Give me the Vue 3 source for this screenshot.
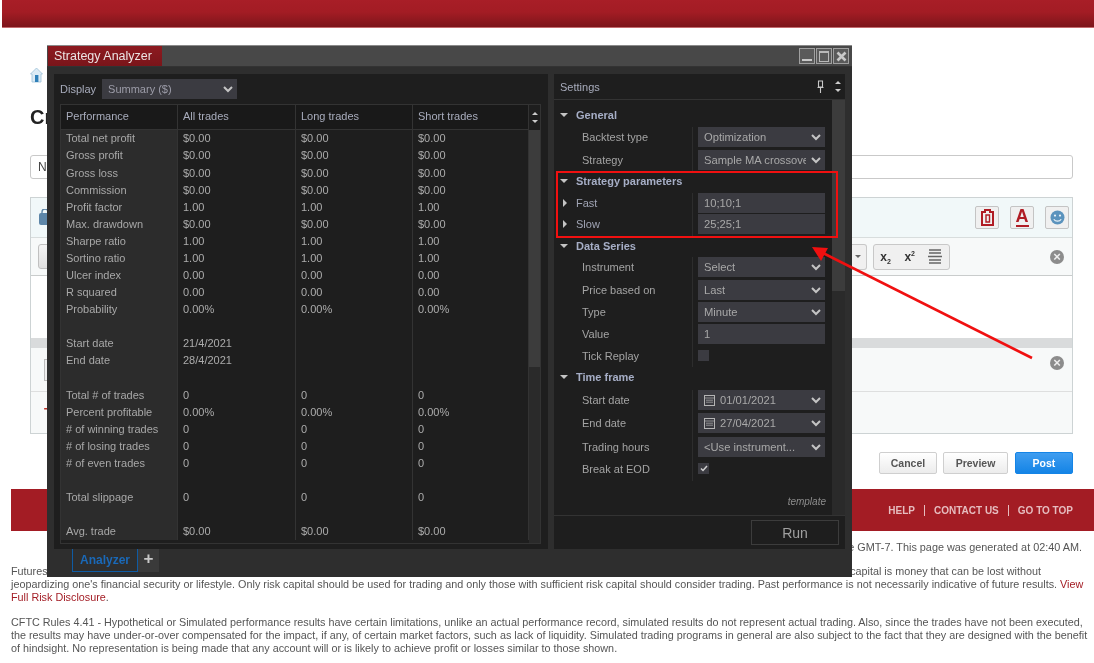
<template>
  <div class="page">
    <div class="top-bar"></div>

    <div class="crumb">
      <svg width="13" height="16" viewBox="0 0 13 16">
        <path d="M6.5 1 L12.5 7 L11 7 L11 15 L2 15 L2 7 L0.5 7 Z" fill="#dcebf5" stroke="#9cc0d8" stroke-width="0.8" />
        <rect x="5" y="8" width="3.4" height="7" fill="#2f7fb8" />
      </svg>
    </div>
    <h1 class="page-title">Cr</h1>
    <div class="title-input">Ne</div>

    <div class="editor">
      <div class="editor-head">
        <svg class="lock" width="12" height="17" viewBox="0 0 12 17"><rect x="0" y="4" width="12" height="12" rx="2" fill="#5d86a8" /><path d="M3 5V3a3 3 0 0 1 6 0V5" fill="none" stroke="#5d86a8" stroke-width="1.4" /></svg>
        <div class="head-tools">
          <button class="tool-btn">
            <svg width="13" height="17" viewBox="0 0 13 17"><path d="M1 3h3V1h5v2h3v13H1z" fill="none" stroke="#b01c24" stroke-width="2" /><path d="M5 6h3.5v7H5z" fill="none" stroke="#b01c24" stroke-width="1.4" /></svg>
          </button>
          <button class="tool-btn"><span class="letter-a">A</span></button>
          <button class="tool-btn">
            <svg width="15" height="15" viewBox="0 0 15 15"><circle cx="7.5" cy="7.5" r="7" fill="#5b93bd" /><circle cx="5" cy="5.6" r="1.1" fill="#e8f1f7" /><circle cx="10" cy="5.6" r="1.1" fill="#e8f1f7" /><path d="M3.8 9.2c1.6 2.6 5.8 2.6 7.4 0" fill="none" stroke="#e8f1f7" stroke-width="1.2" /></svg>
          </button>
        </div>
      </div>
      <div class="editor-toolbar">
        <div class="tool-frag"></div>
        <div class="caret-frag"><i class="mini-caret"></i></div>
        <div class="tool-group">
          <span class="script">x<sub>2</sub></span>
          <span class="script">x<sup>2</sup></span>
          <svg width="14" height="15" viewBox="0 0 14 15"><path d="M1 1h12M1 4h12M0 7.5h14M1 11h12M1 14h12" stroke="#666" stroke-width="1.3" /></svg>
        </div>
        <span class="clear-dot">×</span>
      </div>
      <div class="editor-text"></div>
      <div class="editor-split"></div>
      <div class="editor-row">
        <div class="row-frag"></div>
        <span class="clear-dot">×</span>
      </div>
      <div class="editor-row last">
        <span class="red-t">T</span>
      </div>
    </div>

    <div class="actions">
      <button class="act">Cancel</button>
      <button class="act">Preview</button>
      <button class="act post">Post</button>
    </div>

    <div class="foot-bar">
      <a>HELP</a><i></i><a>CONTACT US</a><i></i><a>GO TO TOP</a>
    </div>

    <p class="gen-line">e GMT-7. This page was generated at 02:40 AM.</p>
    <div class="legal">
      <div class="legal-first"><span>Futures</span><span>capital is money that can be lost without</span></div>
      jeopardizing one's financial security or lifestyle. Only risk capital should be used for trading and only those with sufficient risk capital should consider trading. Past performance is not necessarily indicative of future results. <span class="red-link">View<br />Full Risk Disclosure</span>.
    </div>
    <div class="legal second">
      CFTC Rules 4.41 - Hypothetical or Simulated performance results have certain limitations, unlike an actual performance record, simulated results do not represent actual trading. Also, since the trades have not been executed,<br />
      the results may have under-or-over compensated for the impact, if any, of certain market factors, such as lack of liquidity. Simulated trading programs in general are also subject to the fact that they are designed with the benefit<br />
      of hindsight. No representation is being made that any account will or is likely to achieve profit or losses similar to those shown.
    </div>

    <!-- floating app window on top of the forum page -->
    <div class="win">
      <div class="win-title">
        <div class="win-tab">Strategy Analyzer</div>
        <div class="win-btns">
          <span class="wb"><i class="wb-min"></i></span>
          <span class="wb"><i class="wb-max"></i></span>
          <span class="wb wb-x">
            <svg width="11" height="11" viewBox="0 0 11 11"><path d="M1.5 1.5l8 8M9.5 1.5l-8 8" stroke="#c8c8c8" stroke-width="2.6" /></svg>
          </span>
        </div>
      </div>

      <div class="win-body">
        <div class="panel perf">
          <div class="display-row">
            <span class="display-lbl">Display</span>
            <div class="select display-sel">
              <span>Summary ($)</span>
              <svg class="chev" width="10" height="7" viewBox="0 0 10 7"><path d="M1 1l4 4 4-4" fill="none" stroke="#c4c4c4" stroke-width="2" /></svg>
            </div>
          </div>

          <div class="tbl">
            <div class="tbl-main">
              <div class="tbl-head">
                <div v-for="h in perfHead" :key="h" class="cell">{{ h }}</div>
              </div>
              <div class="tbl-body">
                <div v-for="(r, i) in perfRows" :key="i" class="tbl-row">
                  <div class="cell lbl">{{ r[0] }}</div>
                  <div class="cell">{{ r[1] }}</div>
                  <div class="cell">{{ r[2] }}</div>
                  <div class="cell">{{ r[3] }}</div>
                </div>
              </div>
            </div>
            <div class="scroll-col">
              <div class="scroll-arrows"><i class="up"></i><i class="down"></i></div>
              <div class="scroll-track"><div class="scroll-thumb perf-thumb"></div></div>
            </div>
          </div>
        </div>

        <div class="panel settings">
          <div class="set-head">
            <span>Settings</span>
            <svg class="pin" width="7" height="14" viewBox="0 0 7 14"><path d="M1.5 1h4v6h-4zM0.5 7.5h6M3.5 8v5" fill="none" stroke="#c8c8c8" stroke-width="1.1" /></svg>
            <div class="set-arrows"><i class="up"></i><i class="down"></i></div>
          </div>

          <div class="set-main">
            <div class="set-list">
              <div
                v-for="r in settingRows"
                :key="r.label"
                class="set-row"
                :class="{ group: r.group }"
                :style="{ height: r.h + 'px' }"
              >
                <template v-if="r.group">
                  <i class="tri-down"></i>
                  <span class="group-name">{{ r.label }}</span>
                </template>
                <template v-else>
                  <div class="set-label" :class="{ nested: r.nested }">
                    <i v-if="r.nested" class="tri-right"></i>
                    <span>{{ r.label }}</span>
                  </div>
                  <div v-if="r.type === 'check'" class="check">
                    <svg v-if="r.on" width="8" height="7" viewBox="0 0 8 7"><path d="M1 3.5l2 2 4-4.5" fill="none" stroke="#d0d0d0" stroke-width="1.5" /></svg>
                  </div>
                  <div v-else class="select">
                    <svg v-if="r.date" class="cal" width="11" height="11" viewBox="0 0 11 11"><rect x="0.5" y="0.5" width="10" height="10" fill="none" stroke="#b4b4b4" /><path d="M0.5 3h10M2 5.2h7M2 7.2h7" stroke="#b4b4b4" stroke-width="0.7" /></svg>
                    <span class="sel-text">{{ r.value }}</span>
                    <svg v-if="r.type === 'select'" class="chev" width="10" height="7" viewBox="0 0 10 7"><path d="M1 1l4 4 4-4" fill="none" stroke="#c4c4c4" stroke-width="2" /></svg>
                  </div>
                </template>
              </div>
              <div class="tpl">template</div>
            </div>
            <div class="set-scroll"><div class="scroll-thumb set-thumb"></div></div>
          </div>

          <div class="set-foot">
            <button class="run">Run</button>
          </div>
        </div>
      </div>

      <div class="tabs">
        <div class="tab on">Analyzer</div>
        <div class="tab add">+</div>
      </div>
    </div>

    <!-- callout drawn over the screenshot -->
    <div class="callout-box"></div>
    <svg class="callout-arrow" width="240" height="130" viewBox="0 0 240 130">
      <path d="M221 115L10 9" stroke="#f01010" stroke-width="2.6" fill="none" />
      <path d="M1 4L17 5L10 18Z" fill="#f01010" />
    </svg>
  </div>
</template>

<script setup>
const perfHead = ["Performance", "All trades", "Long trades", "Short trades"];

const perfRows = [
  ["Total net profit", "$0.00", "$0.00", "$0.00"],
  ["Gross profit", "$0.00", "$0.00", "$0.00"],
  ["Gross loss", "$0.00", "$0.00", "$0.00"],
  ["Commission", "$0.00", "$0.00", "$0.00"],
  ["Profit factor", "1.00", "1.00", "1.00"],
  ["Max. drawdown", "$0.00", "$0.00", "$0.00"],
  ["Sharpe ratio", "1.00", "1.00", "1.00"],
  ["Sortino ratio", "1.00", "1.00", "1.00"],
  ["Ulcer index", "0.00", "0.00", "0.00"],
  ["R squared", "0.00", "0.00", "0.00"],
  ["Probability", "0.00%", "0.00%", "0.00%"],
  ["", "", "", ""],
  ["Start date", "21/4/2021", "", ""],
  ["End date", "28/4/2021", "", ""],
  ["", "", "", ""],
  ["Total # of trades", "0", "0", "0"],
  ["Percent profitable", "0.00%", "0.00%", "0.00%"],
  ["# of winning trades", "0", "0", "0"],
  ["# of losing trades", "0", "0", "0"],
  ["# of even trades", "0", "0", "0"],
  ["", "", "", ""],
  ["Total slippage", "0", "0", "0"],
  ["", "", "", ""],
  ["Avg. trade", "$0.00", "$0.00", "$0.00"],
];

// h = distance to the next row, the rows in the real app are not even
const settingRows = [
  { label: "General", group: true, h: 22 },
  { label: "Backtest type", type: "select", value: "Optimization", h: 23 },
  { label: "Strategy", type: "select", value: "Sample MA crossove", h: 21 },
  { label: "Strategy parameters", group: true, h: 22 },
  { label: "Fast", nested: true, type: "input", value: "10;10;1", h: 21 },
  { label: "Slow", nested: true, type: "input", value: "25;25;1", h: 22 },
  { label: "Data Series", group: true, h: 21 },
  { label: "Instrument", type: "select", value: "Select", h: 23 },
  { label: "Price based on", type: "select", value: "Last", h: 22 },
  { label: "Type", type: "select", value: "Minute", h: 22 },
  { label: "Value", type: "input", value: "1", h: 22 },
  { label: "Tick Replay", type: "check", on: false, h: 21 },
  { label: "Time frame", group: true, h: 23 },
  { label: "Start date", type: "select", date: true, value: "01/01/2021", h: 23 },
  { label: "End date", type: "select", date: true, value: "27/04/2021", h: 24 },
  { label: "Trading hours", type: "select", value: "<Use instrument...", h: 22 },
  { label: "Break at EOD", type: "check", on: true, h: 22 },
];
</script>

<style>
html,
body {
  margin: 0;
  background: #fff;
}
</style>

<style scoped>
.page {
  position: relative;
  width: 1094px;
  height: 663px;
  overflow: hidden;
  background: #fff;
  font-family: "Liberation Sans", Arial, sans-serif;
  color: #555;
  filter: blur(0.35px);
}

.top-bar {
  height: 27px;
  margin-left: 2px;
  background: linear-gradient(#a81e27 0%, #a31c24 45%, #7d151a 100%);
  border-bottom: 1px solid #c46a6e;
}

.crumb {
  height: 16px;
  margin: 39px 0 0 30px;
}

.page-title {
  margin: 22px 0 0 30px;
  font-size: 20px;
  line-height: 24px;
  color: #222;
}

.title-input {
  margin: 26px 21px 0 30px;
  height: 22px;
  line-height: 22px;
  padding-left: 7px;
  border: 1px solid #c9c9c9;
  border-radius: 3px;
  font-size: 12px;
  color: #444;
}

.editor {
  margin: 18px 21px 0 30px;
  border: 1px solid #cdd3d4;
  background: #f7f9f9;
}

.editor-head {
  height: 39px;
  display: flex;
  align-items: center;
  justify-content: space-between;
  padding: 0 3px 0 8px;
  background: #f1f8f9;
  border-bottom: 1px solid #d8dddd;
}

.head-tools {
  display: flex;
  gap: 11px;
}

.tool-btn {
  width: 24px;
  height: 23px;
  padding: 0;
  display: flex;
  align-items: center;
  justify-content: center;
  background: #f0f0f0;
  border: 1px solid #c4c4c4;
  border-radius: 2px;
}

.letter-a {
  font-size: 18px;
  line-height: 17px;
  font-weight: bold;
  color: #b01c24;
  border-bottom: 2px solid #b01c24;
}

.editor-toolbar {
  height: 37px;
  display: flex;
  align-items: center;
  padding: 0 8px 0 7px;
  border-bottom: 1px solid #c9cccc;
}

.tool-frag {
  width: 12px;
  height: 23px;
  margin-right: 799px;
  background: linear-gradient(#f4f4f4, #e0e0e0);
  border: 1px solid #c0c0c0;
  border-radius: 3px 0 0 3px;
}

.caret-frag {
  width: 15px;
  height: 24px;
  margin-right: 6px;
  display: flex;
  align-items: center;
  justify-content: center;
  background: #f0f0f0;
  border: 1px solid #c8c8c8;
  border-left: none;
  border-radius: 0 3px 3px 0;
}

.mini-caret {
  border: 3px solid transparent;
  border-top: 3px solid #666;
  margin-top: 3px;
}

.tool-group {
  width: 77px;
  height: 24px;
  display: flex;
  align-items: center;
  justify-content: space-around;
  background: #f0f0f0;
  border: 1px solid #c8c8c8;
  border-radius: 3px;
  margin-right: 100px;
}

.script {
  font-size: 12px;
  font-weight: bold;
  color: #333;
}

.script sub,
.script sup {
  font-size: 7px;
  line-height: 0;
}

.clear-dot {
  width: 14px;
  height: 14px;
  border-radius: 50%;
  background: #8c8c8c;
  color: #eee;
  font-size: 13px;
  font-weight: bold;
  line-height: 14px;
  text-align: center;
}

.editor-text {
  height: 62px;
  background: #fff;
}

.editor-split {
  height: 10px;
  background: #d9dbdc;
}

.editor-row {
  height: 43px;
  display: flex;
  align-items: center;
  justify-content: space-between;
  padding: 0 8px 0 13px;
  border-bottom: 1px solid #dedfdf;
}

.editor-row .clear-dot {
  margin-top: -13px;
}

.editor-row.last {
  height: 41px;
  border-bottom: none;
}

.row-frag {
  width: 4px;
  height: 20px;
  background: #eee;
  border: 1px solid #bbb;
}

.red-t {
  font-size: 13px;
  font-weight: bold;
  color: #b8322a;
}

.actions {
  display: flex;
  justify-content: flex-end;
  gap: 6px;
  margin: 18px 21px 0 0;
}

.act {
  width: 58px;
  height: 22px;
  padding: 0;
  font: bold 10.5px "Liberation Sans", Arial, sans-serif;
  color: #555;
  background: linear-gradient(#fff, #ececec);
  border: 1px solid #cfcfcf;
  border-radius: 2px;
}

.act:nth-child(2) {
  width: 65px;
}

.act.post {
  margin-left: 1px;
  color: #fff;
  background: linear-gradient(#3f9df0, #1484e6);
  border-color: #1484e6;
}

.foot-bar {
  height: 42px;
  margin: 15px 0 0 11px;
  padding-right: 21px;
  display: flex;
  align-items: center;
  justify-content: flex-end;
  background: #a31c24;
  font-size: 10px;
  font-weight: bold;
  color: #e6bcbf;
}

.foot-bar i {
  width: 1px;
  height: 11px;
  margin: 0 9px;
  background: #e6bcbf;
}

.gen-line {
  margin: 9px 12px 0 0;
  font-size: 10.85px;
  line-height: 14px;
  text-align: right;
  color: #555;
}

.legal {
  margin: 11px 0 0 11px;
  font-size: 10.8px;
  line-height: 12.8px;
  white-space: nowrap;
  color: #555;
}

.legal-first {
  width: 1030px;
  display: flex;
  justify-content: space-between;
}

.legal.second {
  margin-top: 13px;
}

.red-link {
  color: #a31c24;
}

/* strategy analyzer window */
.win {
  position: absolute;
  left: 47px;
  top: 45px;
  width: 805px;
  height: 532px;
  display: flex;
  flex-direction: column;
  background: #2e2e2e;
  border-top: 1px solid #8a8a8a;
  box-sizing: border-box;
  color: #acacac;
  font-size: 11px;
}

.win-title {
  height: 20px;
  flex: none;
  display: flex;
  align-items: center;
  justify-content: space-between;
  background: #484848;
  border-bottom: 1px solid #333;
}

.win-tab {
  height: 20px;
  width: 114px;
  margin-left: 1px;
  padding-left: 6px;
  box-sizing: border-box;
  line-height: 20px;
  font-size: 12.5px;
  color: #ece4e4;
  background: linear-gradient(#8d1a20, #7a151a);
}

.win-btns {
  display: flex;
  gap: 1px;
  margin-right: 3px;
}

.wb {
  width: 14px;
  height: 14px;
  display: flex;
  align-items: center;
  justify-content: center;
  border: 1px solid #a0a0a0;
  background: #5a5a5a;
}

.wb-min {
  width: 10px;
  height: 2px;
  margin-top: 8px;
  background: #c8c8c8;
}

.wb-max {
  width: 8px;
  height: 8px;
  border: 1px solid #b8b8b8;
  border-top-width: 2px;
}

.win-body {
  flex: none;
  height: 475px;
  margin: 7px 7px 0;
  display: flex;
  gap: 6px;
}

.panel {
  background: #1e1e1e;
  box-sizing: border-box;
}

.perf {
  width: 494px;
  padding: 0 6px;
}

.display-row {
  height: 30px;
  display: flex;
  align-items: center;
  gap: 6px;
}

.display-lbl {
  color: #a8acbc;
}

.select {
  position: relative;
  flex: none;
  width: 127px;
  height: 20px;
  box-sizing: border-box;
  display: flex;
  align-items: center;
  gap: 5px;
  padding-left: 6px;
  background: #3b3b41;
  color: #a8a8a8;
  font-size: 11.2px;
}

.sel-text {
  max-width: 102px;
  overflow: hidden;
  white-space: nowrap;
}

.display-sel {
  width: 135px;
  height: 20px;
  font-size: 11px;
  color: #9c9ca8;
}

.chev {
  position: absolute;
  right: 4px;
  top: 7px;
}

.tbl {
  display: flex;
  width: 481px;
  height: 440px;
  border: 1px solid #333;
  box-sizing: border-box;
}

.tbl-main {
  width: 468px;
}

.tbl-head,
.tbl-row {
  display: grid;
  grid-template-columns: 117px 118px 117px 116px;
}

.tbl-head {
  height: 24px;
  background: #191919;
  border-bottom: 1px solid #333;
  box-sizing: content-box;
  line-height: 23px;
  color: #a8acbc;
}

.tbl-head .cell {
  height: 24px;
}

.tbl-body {
  height: 414px;
  overflow: hidden;
  box-sizing: border-box;
}

.tbl-row {
  height: 17.09px;
  line-height: 17px;
}

.tbl-row:first-child {
  margin-top: 0.4px;
}

.cell {
  padding-left: 5px;
  box-sizing: border-box;
  border-right: 1px solid #333;
  white-space: nowrap;
  overflow: hidden;
}

.cell.lbl {
  background: #2c2c2c;
  color: #a8a8a8;
}

.scroll-col {
  width: 11px;
  display: flex;
  flex-direction: column;
}

.scroll-arrows,
.set-arrows {
  height: 25px;
  flex: none;
  display: flex;
  flex-direction: column;
  align-items: center;
  justify-content: center;
  gap: 5px;
}

.up {
  border: 3px solid transparent;
  border-top: none;
  border-bottom: 3px solid #ccc;
}

.down {
  border: 3px solid transparent;
  border-bottom: none;
  border-top: 3px solid #ccc;
}

.scroll-track {
  flex: 1;
  background: #2a2a2a;
}

.scroll-thumb {
  background: #3c3c3c;
}

.perf-thumb {
  height: 237px;
}

.settings {
  width: 291px;
  display: flex;
  flex-direction: column;
}

.set-head {
  height: 26px;
  flex: none;
  display: flex;
  align-items: center;
  padding-left: 6px;
  border-bottom: 1px solid #333;
  box-sizing: border-box;
  color: #a8acbc;
}

.pin {
  margin-left: auto;
  margin-right: 8px;
}

.set-arrows {
  width: 12px;
  margin-right: 1px;
}

.set-main {
  height: 415px;
  flex: none;
  display: flex;
}

.set-list {
  width: 278px;
  padding-top: 5px;
  box-sizing: border-box;
}

.set-row {
  display: flex;
  align-items: flex-start;
}

.set-row.group {
  align-items: flex-start;
  line-height: 20px;
}

.tri-down {
  margin: 8px 0 0 6px;
  border: 4px solid transparent;
  border-bottom: none;
  border-top: 4px solid #c4c4c4;
}

.group-name {
  margin-left: 8px;
  font-weight: bold;
  color: #a6aec6;
}

.set-label {
  width: 139px;
  height: 100%;
  flex: none;
  box-sizing: border-box;
  padding-left: 28px;
  line-height: 20px;
  border-right: 1px solid #2d2d2d;
  color: #a4a4a4;
}

.set-label.nested {
  display: flex;
  padding-left: 9px;
  color: #a0a4b4;
}

.tri-right {
  align-self: flex-start;
  flex: none;
  margin: 6px 9px 0 0;
  border: 4px solid transparent;
  border-left: 4px solid #c4c4c4;
  border-right: none;
}

.set-label + .select {
  margin-left: 5px;
}

.set-label + .check {
  margin-left: 5px;
  margin-top: 4px;
}

.check {
  width: 11px;
  height: 11px;
  display: flex;
  align-items: center;
  justify-content: center;
  background: #3b3b41;
}

.tpl {
  padding-right: 6px;
  text-align: right;
  margin-top: 15px;
  font-size: 10px;
  font-style: italic;
  color: #8c8c8c;
}

.set-scroll {
  width: 13px;
  background: #2a2a2a;
}

.set-thumb {
  height: 191px;
}

.set-foot {
  flex: 1;
  display: flex;
  align-items: center;
  justify-content: flex-end;
  padding-right: 6px;
  border-top: 1px solid #333;
}

.run {
  width: 88px;
  height: 25px;
  padding: 0;
  background: #1e1e1e;
  border: 1px solid #3c3c3c;
  font: 14px "Liberation Sans", Arial, sans-serif;
  color: #a0a0a0;
}

.tabs {
  display: flex;
  height: 23px;
  margin-left: 25px;
}

.tab.on {
  width: 66px;
  box-sizing: border-box;
  text-align: center;
  line-height: 23px;
  font-size: 12px;
  font-weight: bold;
  color: #1a69b8;
  border: 1px solid #0f5ba3;
  border-top: none;
}

.tab.add {
  width: 21px;
  text-align: center;
  line-height: 20px;
  font-size: 17px;
  font-weight: bold;
  background: #3a3a3a;
  color: #c8c8c8;
}

.callout-box {
  position: absolute;
  left: 556px;
  top: 171px;
  width: 282px;
  height: 67px;
  box-sizing: border-box;
  border: 2px solid #f01010;
}

.callout-arrow {
  position: absolute;
  left: 811px;
  top: 243px;
}
</style>
